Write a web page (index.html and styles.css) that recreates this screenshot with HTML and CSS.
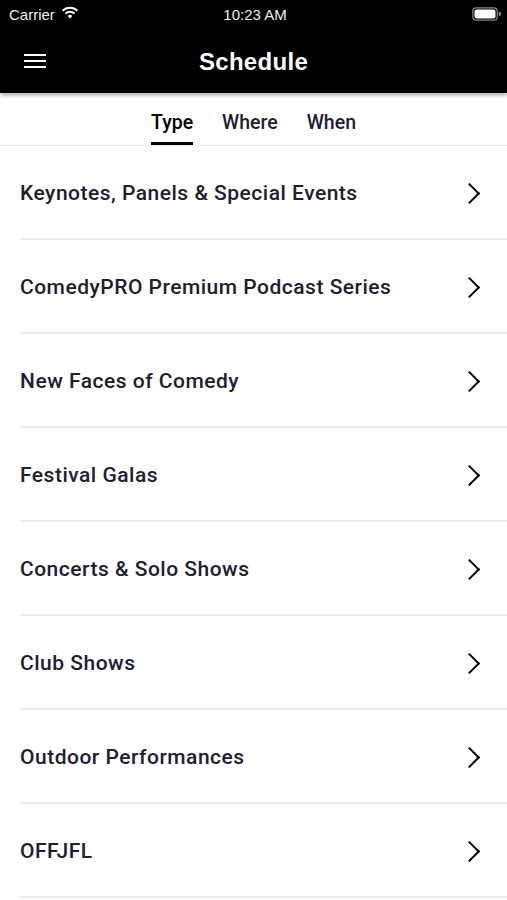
FILE: index.html
```html
<!DOCTYPE html>
<html lang="en">
<head>
    <meta charset="UTF-8">
    <meta name="viewport" content="width=device-width, initial-scale=1.0">
    <title>Schedule</title>
    <link rel="stylesheet" href="styles.css">
</head>
<body>
    <header class="topbar">
        <div class="status">
            <div class="carrier">
                Carrier
                <svg class="wifi" width="18" height="13" viewBox="0 0 18 13">
                    <path d="M9 12.5 L6.6 9.9 A3.4 3.4 0 0 1 11.4 9.9 Z" fill="#fff"/>
                    <path d="M4.4 7.6 A6.6 6.6 0 0 1 13.6 7.6" stroke="#fff" stroke-width="2" fill="none"/>
                    <path d="M1.6 4.8 A10.4 10.4 0 0 1 16.4 4.8" stroke="#fff" stroke-width="2" fill="none"/>
                </svg>
            </div>
            <div class="time">10:23 AM</div>
            <div class="battery">
                <svg width="29" height="14" viewBox="0 0 29 14">
                    <rect x="0.8" y="0.8" width="24.4" height="12.4" rx="3.5" fill="none" stroke="#888" stroke-width="1.2"/>
                    <rect x="2.5" y="2.5" width="21" height="9" rx="2" fill="#fff"/>
                    <path d="M26.8 4.7 v4.6 a2.2 2.2 0 0 0 0 -4.6z" fill="#888"/>
                </svg>
            </div>
        </div>
        <div class="navbar">
            <svg class="menu" width="22" height="16" viewBox="0 0 22 16">
                <rect x="0" y="1" width="22" height="2" fill="#fff"/>
                <rect x="0" y="7" width="22" height="2" fill="#fff"/>
                <rect x="0" y="13" width="22" height="2" fill="#fff"/>
            </svg>
            <h1>Schedule</h1>
        </div>
    </header>

    <nav class="tabs">
        <a class="tab active">Type</a>
        <a class="tab">Where</a>
        <a class="tab">When</a>
    </nav>

    <ul class="list">
        <li><span>Keynotes, Panels &amp; Special Events</span><i class="chev"></i></li>
        <li><span>ComedyPRO Premium Podcast Series</span><i class="chev"></i></li>
        <li><span>New Faces of Comedy</span><i class="chev"></i></li>
        <li><span>Festival Galas</span><i class="chev"></i></li>
        <li><span>Concerts &amp; Solo Shows</span><i class="chev"></i></li>
        <li><span>Club Shows</span><i class="chev"></i></li>
        <li><span>Outdoor Performances</span><i class="chev"></i></li>
        <li><span>OFFJFL</span><i class="chev"></i></li>
    </ul>
</body>
</html>
```

FILE: styles.css
```css
body {
    margin: 0;
    font-family: 'Roboto', 'Liberation Sans', sans-serif;
    background: #fff;
    color: #1c2030;
    width: 507px;
    overflow: hidden;
}
.topbar {
    background: #000;
    color: #fff;
    box-shadow: 0 2px 5px rgba(0, 0, 0, 0.35);
    position: relative;
    z-index: 2;
}
.status {
    height: 28px;
    display: flex;
    align-items: center;
    justify-content: space-between;
    padding: 0 6px 0 9px;
    font-family: 'Liberation Sans', sans-serif;
    font-size: 15px;
}
.carrier {
    display: flex;
    align-items: center;
    gap: 6px;
    width: 120px;
    color: #eee;
}
.wifi {
    margin-top: -3px;
}
.time {
    color: #eee;
}
.battery {
    width: 120px;
    display: flex;
    justify-content: flex-end;
}
.navbar {
    height: 65px;
    display: flex;
    align-items: center;
    justify-content: center;
    position: relative;
}
.navbar .menu {
    position: absolute;
    left: 24px;
    top: 50%;
    transform: translateY(-50%);
}
.navbar h1 {
    margin: 0;
    font-family: 'Liberation Sans', sans-serif;
    font-size: 24px;
    font-weight: bold;
    letter-spacing: 0.3px;
    margin-top: 2px;
}
.tabs {
    display: flex;
    justify-content: center;
    height: 53px;
    border-bottom: 1px solid #e6e6e6;
    box-sizing: border-box;
}
.tab {
    font-size: 19.5px;
    font-weight: 500;
    color: #1c2030;
    padding: 18px 0 0;
    margin: 0 14.5px;
    box-sizing: border-box;
    height: 52px;
}
.tab.active {
    color: #000;
    border-bottom: 3px solid #000;
}
.list {
    list-style: none;
    margin: 0;
    padding: 0 0 0 20px;
}
.list li {
    height: 94px;
    display: flex;
    align-items: center;
    justify-content: space-between;
    border-bottom: 2px solid #ececec;
    box-sizing: border-box;
    font-size: 21px;
    font-weight: 500;
    letter-spacing: 0.5px;
    color: #1c2030;
    padding: 2px 28px 0 0;
}
.chev {
    width: 13px;
    height: 13px;
    border-top: 2.5px solid #000;
    border-right: 2.5px solid #000;
    transform: rotate(45deg);
    margin-right: 2px;
}
```
